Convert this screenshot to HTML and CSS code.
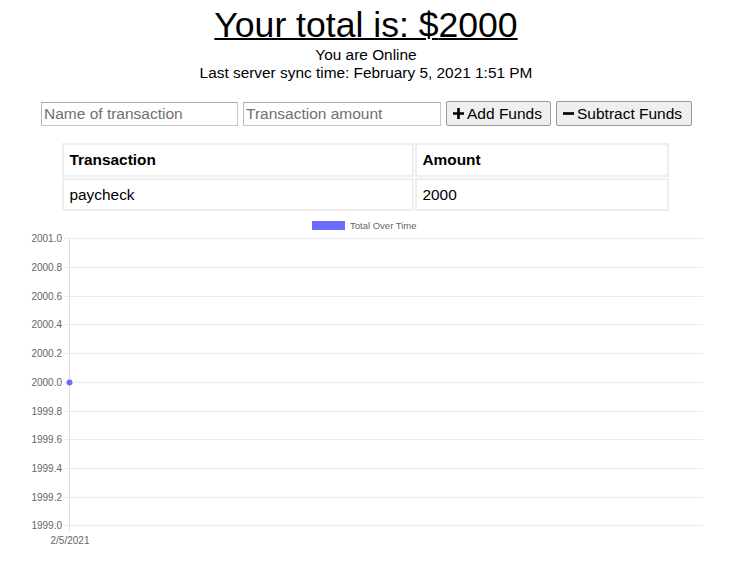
FILE: index.html
```html
<!DOCTYPE html>
<html>
<head>
<meta charset="utf-8">
<link rel="stylesheet" href="styles.css">
</head>
<body>
<header class="top">
  <h1 class="total">Your total is: $<span>2000</span></h1>
  <div class="status">You are Online</div>
  <div class="status">Last server sync time: February 5, 2021 1:51 PM</div>
</header>
<div class="form">
  <input class="field f1" type="text" placeholder="Name of transaction">
  <input class="field f2" type="number" placeholder="Transaction amount">
  <button class="btn add"><svg class="ico" viewBox="0 0 10 10"><path d="M3.8 0h2.4v3.8H10v2.4H6.2V10H3.8V6.2H0V3.8h3.8z" fill="#000"/></svg>Add Funds</button>
  <button class="btn sub"><svg class="ico" viewBox="0 0 10 10"><path d="M0 3.8h10v2.4H0z" fill="#000"/></svg>Subtract Funds</button>
</div>
<table class="tbl">
  <thead><tr><th class="c1">Transaction</th><th>Amount</th></tr></thead>
  <tbody><tr><td>paycheck</td><td>2000</td></tr></tbody>
</table>
<div class="chart">
  <svg width="732" height="340" viewBox="0 0 732 340">
    <rect x="312" y="6" width="33" height="9" fill="#6b6bff"/>
    <text x="350" y="14" class="legend">Total Over Time</text>
    <g stroke="#ebebeb" stroke-width="1">
      <line x1="64" y1="23.5" x2="703" y2="23.5"/>
      <line x1="64" y1="52.5" x2="703" y2="52.5"/>
      <line x1="64" y1="81.5" x2="703" y2="81.5"/>
      <line x1="64" y1="109.5" x2="703" y2="109.5"/>
      <line x1="64" y1="138.5" x2="703" y2="138.5"/>
      <line x1="64" y1="167.5" x2="703" y2="167.5"/>
      <line x1="64" y1="196.5" x2="703" y2="196.5"/>
      <line x1="64" y1="224.5" x2="703" y2="224.5"/>
      <line x1="64" y1="253.5" x2="703" y2="253.5"/>
      <line x1="64" y1="282.5" x2="703" y2="282.5"/>
      <line x1="64" y1="310.5" x2="703" y2="310.5"/>
      <line x1="69.5" y1="23" x2="69.5" y2="316" stroke="#dedede"/>
    </g>
    <g class="ylab" text-anchor="end">
      <text x="62" y="27">2001.0</text>
      <text x="62" y="56">2000.8</text>
      <text x="62" y="85">2000.6</text>
      <text x="62" y="113">2000.4</text>
      <text x="62" y="142">2000.2</text>
      <text x="62" y="171">2000.0</text>
      <text x="62" y="200">1999.8</text>
      <text x="62" y="228">1999.6</text>
      <text x="62" y="257">1999.4</text>
      <text x="62" y="286">1999.2</text>
      <text x="62" y="314">1999.0</text>
    </g>
    <text x="70" y="329" class="ylab" text-anchor="middle">2/5/2021</text>
    <circle cx="69.5" cy="167.5" r="3" fill="#6b6bff"/>
  </svg>
</div>
</body>
</html>
```

FILE: styles.css
```css
html, body {
  margin: 0;
  padding: 0;
  background: #fff;
}
body {
  font-family: "Liberation Sans", Arial, sans-serif;
  color: #000;
}
.top {
  text-align: center;
}
.total {
  margin: 0;
  padding-top: 5px;
  font-size: 35.6px;
  font-weight: normal;
  line-height: 41px;
  text-decoration: underline;
  text-decoration-thickness: 2px;
}
.status {
  font-size: 15.4px;
  line-height: 18px;
}
.form {
  display: flex;
  justify-content: center;
  gap: 5px;
  margin-top: 20px;
  padding-left: 1px;
}
.field {
  box-sizing: border-box;
  height: 24px;
  padding: 1px 2px;
  border: 1px solid #c8c8c8;
  border-top-color: #a8a8a8;
  border-left-color: #b8b8b8;
  font-family: "Liberation Sans", Arial, sans-serif;
  font-size: 15.5px;
  margin: 0;
}
.f1 { width: 197px; }
.f2 { width: 198px; }
.field::placeholder { color: #707070; }
.btn {
  box-sizing: border-box;
  height: 25px;
  margin-top: -1px;
  padding: 0 6px;
  border: 1px solid #9a9a9a;
  border-radius: 2px;
  background: #efefef;
  font-family: "Liberation Sans", Arial, sans-serif;
  font-size: 15.5px;
  color: #000;
  display: flex;
  align-items: center;
  gap: 3px;
}
.add { width: 105px; }
.sub { width: 136px; }
.ico {
  width: 11px;
  height: 11px;
}
.tbl {
  width: 609px;
  margin: 16px auto 0;
  border-collapse: separate;
  border-spacing: 1px;
  font-family: "Liberation Sans", Arial, sans-serif;
  font-size: 15.4px;
  position: relative;
  left: -1px;
}
.tbl th, .tbl td {
  border: 2px solid #eeeeee;
  text-align: left;
  padding: 0 6px;
}
.tbl th {
  height: 30px;
  font-weight: bold;
}
.tbl td {
  height: 29px;
}
.c1 { width: 336px; }
.chart {
  margin-top: 3px;
}
.chart svg {
  display: block;
}
.ylab {
  font-family: "Liberation Sans", Arial, sans-serif;
  font-size: 10px;
  fill: #666;
}
.legend {
  font-family: "Liberation Sans", Arial, sans-serif;
  font-size: 9.5px;
  fill: #666;
}
```
